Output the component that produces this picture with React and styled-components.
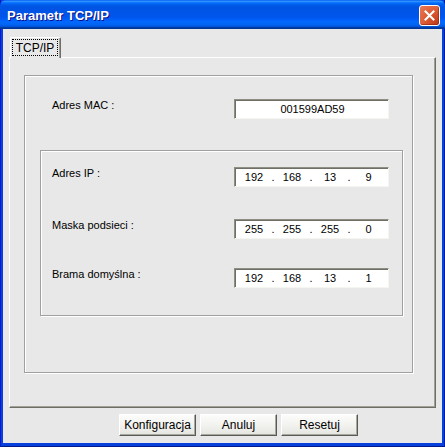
import React from "react";
import styled, { createGlobalStyle } from "styled-components";

const Global = createGlobalStyle`
  html, body { margin: 0; padding: 0; background: #fff; }
  body { width: 445px; height: 447px; overflow: hidden; }
  * { box-sizing: border-box; }
`;

const Window = styled.div`
  width: 445px;
  height: 447px;
  display: flex;
  flex-direction: column;
  background: #0840dc;
  border-left: 1px solid #0019cf;
  border-right: 1px solid #001ea0;
  border-bottom: 1px solid #001a8c;
  font-family: "Liberation Sans", Arial, sans-serif;
  color: #000;
`;

const TitleBar = styled.div`
  height: 29px;
  flex: none;
  margin: 0 -1px;
  display: flex;
  align-items: center;
  justify-content: space-between;
  padding: 1px 5px 0 7px;
  border-radius: 6px 6px 0 0;
  background: linear-gradient(
    to bottom,
    #0058ee 0%, #3593ff 4%, #288eff 6%, #127dff 8%, #036ffc 10%,
    #0262ee 14%, #0057e5 20%, #0054e3 24%, #0055eb 56%, #005bf5 66%,
    #026afe 76%, #0062ef 86%, #0052d6 92%, #0040ab 94%, #003092 100%
  );
`;

const Title = styled.span`
  font-family: "Liberation Sans", Arial, sans-serif;
  font-weight: bold;
  font-size: 13px;
  color: #fff;
  text-shadow: 1px 1px #0f1089;
`;

const CloseButton = styled.div`
  width: 21px;
  height: 21px;
  border: 1px solid #fff;
  border-radius: 3px;
  background: radial-gradient(circle at 85% 85%, #c4401f 0%, #d9552f 40%, #ea7a55 100%);
  display: flex;
  align-items: center;
  justify-content: center;
  box-shadow: inset -1px -1px 1px rgba(120, 20, 0, 0.5);
`;

const Frame = styled.div`
  flex: 1;
  display: flex;
  padding: 0 2px 3px 2px;
`;

const Client = styled.div`
  flex: 1;
  background: #e8e8e8;
  display: flex;
  flex-direction: column;
  padding: 8px 0 0 6px;
`;

const TabStrip = styled.div`
  height: 20px;
  display: flex;
  padding-left: 1px;
`;

const Tab = styled.div`
  width: 51px;
  height: 21px;
  background: #e8e8e8;
  border-top: 1px solid #fff;
  border-left: 1px solid #fff;
  border-right: 1px solid #6e6e66;
  box-shadow: inset -1px 0 #a0a096;
  border-radius: 2px 2px 0 0;
  padding: 1px 2px 0 1px;
  position: relative;
  z-index: 1;
`;

const FocusRect = styled.div`
  height: 17px;
  border: 1px dotted #000;
  display: flex;
  align-items: center;
  justify-content: center;
  font-size: 12px;
  line-height: 14px;
`;

const Panel = styled.div`
  width: 427px;
  height: 351px;
  border-top: 1px solid #fff;
  border-left: 1px solid #fff;
  border-right: 1px solid #6e6e66;
  border-bottom: 1px solid #6e6e66;
  box-shadow: inset -1px -1px #a0a096;
  padding: 17px 0 0 14px;
`;

const GroupBox = styled.div`
  width: ${(p) => p.$w}px;
  height: ${(p) => p.$h}px;
  margin-top: ${(p) => p.$mt || 0}px;
  margin-left: ${(p) => p.$ml || 0}px;
  border: 1px solid #a0a0a0;
  box-shadow: inset 1px 1px #fff, 1px 1px #fff;
  padding: ${(p) => p.$pad};
  display: flex;
  flex-direction: column;
`;

const Row = styled.div`
  display: flex;
  align-items: flex-start;
  margin-top: ${(p) => p.$mt || 0}px;
`;

const Label = styled.div`
  width: 182px;
  font-size: 11px;
  line-height: 13px;
  white-space: nowrap;
`;

const Field = styled.div`
  width: 155px;
  height: 20px;
  background: #fff;
  border-top: 1px solid #8e8e84;
  border-left: 1px solid #8e8e84;
  border-right: 1px solid #f6f6f0;
  border-bottom: 1px solid #f6f6f0;
  box-shadow: inset 1px 1px #6f6f66;
  font-size: 11px;
  line-height: 18px;
`;

const MacText = styled.div`
  text-align: center;
  padding-left: 2px;
`;

const IpGrid = styled.div`
  display: grid;
  grid-template-columns: 32px 6px 32px 6px 32px 6px 33px;
  padding-left: 3px;
  text-align: center;
`;

const Dot = styled.span`
  text-align: center;
`;

const ButtonRow = styled.div`
  display: flex;
  gap: 4px;
  margin-top: 6px;
  padding-left: 110px;
`;

const Button = styled.div`
  width: 77px;
  height: 22px;
  background: linear-gradient(to bottom, #fcfcfb 0%, #f2f2ef 50%, #e4e4e0 100%);
  border-top: 1px solid #fff;
  border-left: 1px solid #fff;
  border-right: 1px solid #5a5a55;
  border-bottom: 1px solid #5a5a55;
  box-shadow: inset -1px -1px #a8a8a0;
  font-size: 12px;
  display: flex;
  align-items: center;
  justify-content: center;
  padding-bottom: 1px;
`;

const IpField = ({ parts }) => (
  <Field>
    <IpGrid>
      {parts.map((p, i) => (
        <React.Fragment key={i}>
          {i > 0 && <Dot>.</Dot>}
          <span>{p}</span>
        </React.Fragment>
      ))}
    </IpGrid>
  </Field>
);

export default function App() {
  return (
    <>
      <Global />
      <Window>
        <TitleBar>
          <Title>Parametr TCP/IP</Title>
          <CloseButton>
            <svg width="11" height="11" viewBox="0 0 11 11">
              <path d="M1.5 1.5 L9.5 9.5 M9.5 1.5 L1.5 9.5" stroke="#fff" strokeWidth="2" strokeLinecap="square" />
            </svg>
          </CloseButton>
        </TitleBar>
        <Frame>
          <Client>
            <TabStrip>
              <Tab>
                <FocusRect>TCP/IP</FocusRect>
              </Tab>
            </TabStrip>
            <Panel>
              <GroupBox $w={389} $h={298} $pad="23px 0 0 27px">
                <Row>
                  <Label>Adres MAC :</Label>
                  <Field>
                    <MacText>001599AD59</MacText>
                  </Field>
                </Row>
                <GroupBox $w={363} $h={166} $mt={31} $ml={-12} $pad="16px 0 0 11px">
                  <Row>
                    <Label>Adres IP :</Label>
                    <IpField parts={["192", "168", "13", "9"]} />
                  </Row>
                  <Row $mt={32}>
                    <Label>Maska podsieci :</Label>
                    <IpField parts={["255", "255", "255", "0"]} />
                  </Row>
                  <Row $mt={29}>
                    <Label>Brama domyślna :</Label>
                    <IpField parts={["192", "168", "13", "1"]} />
                  </Row>
                </GroupBox>
              </GroupBox>
            </Panel>
            <ButtonRow>
              <Button>Konfiguracja</Button>
              <Button>Anuluj</Button>
              <Button>Resetuj</Button>
            </ButtonRow>
          </Client>
        </Frame>
      </Window>
    </>
  );
}
